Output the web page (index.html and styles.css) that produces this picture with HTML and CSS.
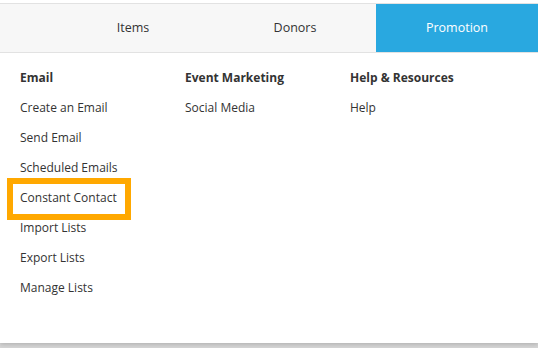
FILE: index.html
```html
<!DOCTYPE html>
<html>
<head>
<meta charset="utf-8">
<link rel="stylesheet" href="styles.css">
</head>
<body>
<div class="menu">
  <nav class="tabs">
    <div class="tab">Items</div>
    <div class="tab">Donors</div>
    <div class="tab active">Promotion</div>
  </nav>
  <div class="panel">
    <div class="col">
      <div class="head">Email</div>
      <div class="link">Create an Email</div>
      <div class="link">Send Email</div>
      <div class="link">Scheduled Emails</div>
      <div class="link highlight">Constant Contact</div>
      <div class="link">Import Lists</div>
      <div class="link">Export Lists</div>
      <div class="link">Manage Lists</div>
    </div>
    <div class="col">
      <div class="head">Event Marketing</div>
      <div class="link">Social Media</div>
    </div>
    <div class="col">
      <div class="head">Help &amp; Resources</div>
      <div class="link">Help</div>
    </div>
  </div>
</div>
</body>
</html>
```
FILE: styles.css
```css
html, body {
  margin: 0;
  padding: 0;
  background: #d6d6d6;
}
body {
  font-family: "Open Sans", "Segoe UI", sans-serif;
  color: #333;
  height: 348px;
  overflow: hidden;
}
.menu {
  background: #fff;
  padding-top: 3px;
  height: 340px;
  box-shadow: 0 2px 4px rgba(0,0,0,0.15);
}
.tabs {
  display: flex;
  padding-left: 52px;
  background: #f7f7f7;
  border-top: 1px solid #e2e2e2;
  border-bottom: 1px solid #e2e2e2;
  height: 48px;
}
.tab {
  width: 162px;
  display: flex;
  align-items: center;
  justify-content: center;
  font-size: 12.5px;
  padding-bottom: 1px;
  color: #333;
}
.tab.active {
  background: #29a8e0;
  color: #fff;
}
.panel {
  display: flex;
  padding: 16px 0 0 20px;
}
.col {
  width: 165px;
  display: flex;
  flex-direction: column;
}
.head {
  font-weight: bold;
  font-size: 12px;
  line-height: 18px;
  height: 30px;
}
.link {
  font-size: 12px;
  line-height: 18px;
  height: 30px;
}
.highlight {
  box-sizing: content-box;
  margin: -11px 0 -1px -13px;
  padding: 5px 0 0 7px;
  width: 105px;
  height: 25px;
  border: 6px solid #ffa800;
}
```
